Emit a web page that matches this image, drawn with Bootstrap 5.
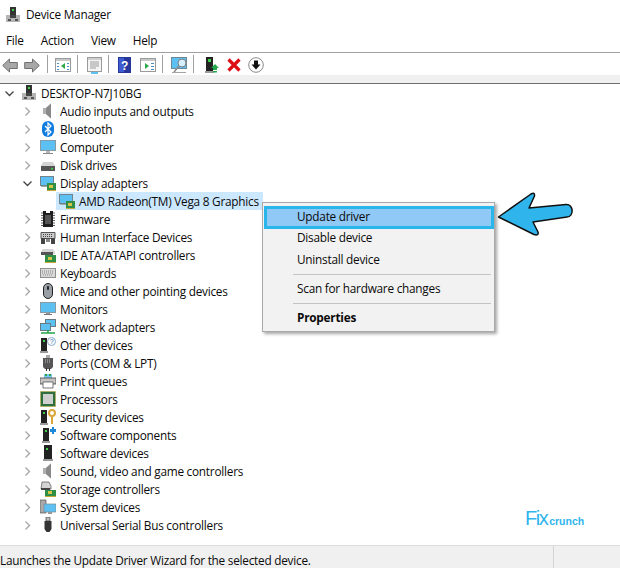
<!DOCTYPE html>
<html lang="en">
<head>
<meta charset="utf-8">
<title>Device Manager</title>
<link href="https://cdn.jsdelivr.net/npm/bootstrap@5.3.0/dist/css/bootstrap.min.css" rel="stylesheet">
<script src="https://cdn.jsdelivr.net/npm/bootstrap@5.3.0/dist/js/bootstrap.bundle.min.js"></script>
<style>
html,body{height:568px;overflow:hidden}
body{font-family:"Open Sans","Noto Sans",sans-serif;font-size:11.8px;color:#0a0a0a;background:#fff;position:relative;letter-spacing:-.24px}
.dm-title{height:30px;padding-left:5px;gap:5px}
.dm-menu{height:22px;padding-left:6px;gap:17px}
.dm-tools{height:23px;border-top:1px solid #a0a0a0;padding-left:2px;padding-top:2px}
.dm-tools svg{display:block;flex:none}
.dm-sep{width:1px;height:18px;background:#a0a0a0;flex:none;margin-top:-3px}
.tm4{margin-left:4px}.tm6{margin-left:6px}.tm7{margin-left:7px}.tm8{margin-left:8px}.tm9{margin-left:9px}.tm11{margin-left:11px}
.dm-band{height:9px;background:#f0f0f0;border-bottom:1px solid #6d6d6d}
.dm-tree{height:461px}
.dm-row{height:18px;line-height:17px;white-space:nowrap}
.dm-chev{width:9px;height:9px;flex:none;margin-right:8px}
.dm-ico{width:16px;height:16px;flex:none;margin-right:4px}
.lv0{padding-left:5px}
.lv1{padding-left:23px}
.lv0 .dm-chev{margin-right:7px}
.dm-sel{background:#cce8ff;margin-left:56px;padding-left:3px;width:207px}
.dm-status{height:24px;background:#f0f0f0;border-top:1px solid #dcdcdc;white-space:nowrap}
.dm-stxt{width:554px;height:100%;line-height:28px;border-right:1px solid #d4d4d4;flex:none}
.dm-ctx{position:absolute;left:262px;top:202px;width:233px;height:130px;background:#f2f2f2;border:1px solid #a9a9a9;box-shadow:2px 2px 3px rgba(0,0,0,.35);padding-top:3px}
.dm-item{height:22px;line-height:21px;padding-left:34px}
.dm-item.on{height:23px;line-height:15px;margin-left:1px;padding-left:30px;background:#90c8f6;border:3px solid #29b6ea;margin-bottom:-2px}
.dm-rule{height:1px;background:#c4c4c4;margin:3px 3px 3px 30px}
.dm-arrow{position:absolute;left:496px;top:190px}
.dm-mark{position:absolute;left:525px;top:506px;color:#2fb5ec;font-family:"Liberation Sans",sans-serif;line-height:24px;letter-spacing:0;white-space:nowrap}
.dm-mark b{font-size:20px;font-weight:400;letter-spacing:-1.500px}
.dm-mark span{font-size:10.500px;font-weight:700;margin-left:2px}
</style>
</head>
<body>
<svg width="0" height="0" class="position-absolute">
<defs>
<symbol id="i-chev" viewBox="0 0 9 9"><path d="M2.500 .5 6.500 4.500 2.500 8.500" fill="none" stroke="#a6a6a6" stroke-width="1.300"/></symbol>
<symbol id="i-down" viewBox="0 0 9 9"><path d="M.5 2.500 4.500 6.500 8.500 2.500" fill="none" stroke="#444" stroke-width="1.300"/></symbol>
<symbol id="i-pc" viewBox="0 0 16 16"><path d="M5 0h6v9H5z" fill="#333"/><rect x="7" y="2" width="2" height="2" fill="#3fd04a"/><path d="M1 8h14v7H1z" fill="#b5b5b5"/><path d="M5 8h6v3H5z" fill="#444"/><path d="M3 12h3v2H3zM10 12h3v2h-3z" fill="#555"/></symbol>
<symbol id="i-speaker" viewBox="0 0 16 16"><path d="M3 5h3l5-4.500v15L6 11H3z" fill="#b0b0b0"/><path d="M6 5l5-4.500v15L6 11z" fill="#8a8a8a"/></symbol>
<symbol id="i-bt" viewBox="0 0 16 16"><rect x="2" y="0" width="12" height="16" rx="6" fill="#0f7de0"/><path d="M5 5l6 6-3 3V2l3 3-6 6" fill="none" stroke="#fff" stroke-width="1.200"/></symbol>
<symbol id="i-mon" viewBox="0 0 16 16"><rect x=".5" y="1.500" width="15" height="10" fill="#5cc0f2" stroke="#8a9aa5"/><path d="M6 12h4v2H6z" fill="#b5b5b5"/><path d="M3 14h10v1H3z" fill="#8a8a8a"/></symbol>
<symbol id="i-disk" viewBox="0 0 16 16"><path d="M3 5h10l2 4v1H1V9z" fill="#d4d4d4"/><path d="M1 9h14v5H1z" fill="#555"/><rect x="11" y="11" width="2" height="1.500" fill="#3fd04a"/></symbol>
<symbol id="i-disp" viewBox="0 0 16 16"><rect x=".5" y="1.500" width="13" height="9" fill="#5cc0f2" stroke="#74828c"/><path d="M1 11h12v1H1z" fill="#9aa"/><rect x="7" y="8" width="9" height="7" fill="#2f8f46"/><rect x="9" y="10" width="4" height="3" fill="#d7c24a"/><path d="M7 15h9v1H7z" fill="#c5a83a"/></symbol>
<symbol id="i-chip" viewBox="0 0 16 16"><rect x="3" y="0" width="10" height="16" fill="#1e1e1e"/><path d="M6 0h4v2H6z" fill="#fff"/><path d="M1 2h2M1 4.500h2M1 7h2M1 9.500h2M1 12h2M1 14.500h2M13 2h2M13 4.500h2M13 7h2M13 9.500h2M13 12h2M13 14.500h2" stroke="#666"/><rect x="5" y="4" width="6" height="9" fill="#555"/></symbol>
<symbol id="i-hid" viewBox="0 0 16 16"><path d="M1 3.500h14v6H1z" fill="#c9c9c9" stroke="#555"/><path d="M3 5.500h10M3 7.500h10" stroke="#444" stroke-dasharray="1 1"/><path d="M1 9h4v6H1zM11 9h4v6h-4z" fill="#444"/><path d="M6 10h4v3H6z" fill="#888"/></symbol>
<symbol id="i-ide" viewBox="0 0 16 16"><path d="M3 2h10l2 3v2H1V5z" fill="#d4d4d4"/><path d="M1 5h12v3H1z" fill="#555"/><rect x="5" y="8" width="11" height="7" fill="#2f8f46"/><rect x="8" y="10" width="4" height="3" fill="#d7c24a"/><path d="M5 15h11v1H5z" fill="#c5a83a"/></symbol>
<symbol id="i-kbd" viewBox="0 0 16 16"><rect y="3" width="16" height="10" fill="#8f8f8f"/><rect x="1" y="4" width="14" height="8" fill="#d9d9d9"/><path d="M2 6h12M2 8h12M3 10h10" stroke="#8a8a8a" stroke-dasharray="1 1"/></symbol>
<symbol id="i-mouse" viewBox="0 0 16 16"><rect x="3.500" y=".5" width="9" height="15" rx="4.500" fill="#9a9fa6" stroke="#222"/><rect x="7" y="3" width="2" height="4" rx="1" fill="#222"/></symbol>
<symbol id="i-moni" viewBox="0 0 16 16"><rect x=".5" y="1.500" width="15" height="10" fill="#5cc0f2" stroke="#8a9aa5"/><path d="M6 12h4v1H6z" fill="#999"/><path d="M4 13h8v1H4z" fill="#777"/></symbol>
<symbol id="i-net" viewBox="0 0 16 16"><rect x="5.500" y=".5" width="10" height="7" fill="#5cc0f2" stroke="#6a7a85"/><rect x=".5" y="4.500" width="10" height="7" fill="#5cc0f2" stroke="#6a7a85"/><path d="M1 14h14M8 11v3" stroke="#25a244" stroke-width="1.500"/></symbol>
<symbol id="i-other" viewBox="0 0 16 16"><path d="M1 1h6v13H1z" fill="#222"/><rect x="3" y="3" width="2" height="2" fill="#3fd04a"/><path d="M0 14h8v2H0z" fill="#999"/><circle cx="11.500" cy="4.500" r="4" fill="#fff" stroke="#8aa8c8"/><text x="11.500" y="7" font-size="7" text-anchor="middle" fill="#2a6fb5" font-family="Liberation Sans">?</text></symbol>
<symbol id="i-port" viewBox="0 0 16 16"><path d="M6 0h4v3H6z" fill="#aaa"/><path d="M3 3h10v9l-2 2H5l-2-2z" fill="#555"/><path d="M5 5h6M5 7h6" stroke="#bbb" stroke-dasharray="1 1"/><path d="M6 13h1v3H6zM9 13h1v3H9z" fill="#333"/></symbol>
<symbol id="i-print" viewBox="0 0 16 16"><path d="M4 1h8v4H4z" fill="#7fc6ee"/><rect y="5" width="16" height="6" fill="#c4c4c4" stroke="#444" stroke-width=".8"/><path d="M3 9h10v6H3z" fill="#fff" stroke="#555" stroke-width=".8"/><path d="M5 1h2v2H5zM9 1h2v2H9z" fill="#2fa84c"/></symbol>
<symbol id="i-cpu" viewBox="0 0 16 16"><rect x=".5" y=".5" width="15" height="15" fill="#2f6e3f" stroke="#c5a83a" stroke-dasharray="1 1"/><rect x="3" y="3" width="10" height="10" fill="#cfcfcf"/></symbol>
<symbol id="i-sec" viewBox="0 0 16 16"><path d="M1 1h6v13H1z" fill="#222"/><rect x="3" y="3" width="2" height="2" fill="#3fd04a"/><path d="M0 14h8v2H0z" fill="#999"/><circle cx="12" cy="4" r="3" fill="none" stroke="#d9a63a" stroke-width="2"/><path d="M12 7v8" stroke="#d9a63a" stroke-width="2"/></symbol>
<symbol id="i-comp" viewBox="0 0 16 16"><path d="M3 1h6v13H3z" fill="#222"/><rect x="5" y="3" width="2" height="2" fill="#3fd04a"/><path d="M2 14h8v2H2z" fill="#999"/><path d="M10 2h2V0h2v2h2v3h-2v2h-2V5h-2z" fill="#1e88d8"/></symbol>
<symbol id="i-sdev" viewBox="0 0 16 16"><path d="M4 0h8v14H4z" fill="#222"/><rect x="6" y="3" width="2" height="2" fill="#3fd04a"/><path d="M3 14h10v2H3z" fill="#999"/></symbol>
<symbol id="i-stor" viewBox="0 0 16 16"><path d="M2 1h7l2 4v3H1z" fill="#d4d4d4" stroke="#555" stroke-width=".7"/><path d="M1 7h9v2H1z" fill="#444"/><rect x="5" y="9" width="11" height="6" fill="#2f8f46"/><rect x="8" y="10" width="4" height="3" fill="#d7c24a"/><path d="M5 15h11v1H5z" fill="#c5a83a"/></symbol>
<symbol id="i-sys" viewBox="0 0 16 16"><path d="M0 1h6v13H0z" fill="#aaa" stroke="#555" stroke-width=".7"/><rect x="4" y="5" width="12" height="8" fill="#5cc0f2" stroke="#7a8a95" stroke-width=".7"/><path d="M8 13h4v2H8z" fill="#999"/></symbol>
<symbol id="i-usb" viewBox="0 0 16 16"><path d="M6 0h4v4H6z" fill="#bbb" stroke="#444" stroke-width=".7"/><path d="M4.500 4h7v8l-2 3h-3l-2-3z" fill="#333"/></symbol>
</defs>
</svg>

<div class="dm-title d-flex align-items-center">
<svg width="16" height="16"><use href="#i-pc"/></svg><span>Device Manager</span>
</div>
<div class="dm-menu d-flex align-items-center"><span>File</span><span>Action</span><span>View</span><span>Help</span></div>
<div class="dm-tools d-flex align-items-center">
<svg width="16" height="15" viewBox="0 0 16 15"><path d="M.7 7.500 7.500 1v3.500h7.800v6H7.500V14z" fill="#a8a8a8" stroke="#6f6f6f"/></svg>
<svg class="tm6" width="16" height="15" viewBox="0 0 16 15"><path d="M15.300 7.500 8.500 1v3.500H.7v6h7.800V14z" fill="#a8a8a8" stroke="#6f6f6f"/></svg>
<span class="dm-sep tm7"></span>
<svg class="tm7" width="16" height="14" viewBox="0 0 16 14"><rect x=".5" y=".5" width="15" height="13" fill="#fff" stroke="#9a9a9a"/><path d="M1 1h14v2H1z" fill="#c8c8c8"/><path d="M10 5 6 8l4 3z" fill="#2fa84c"/><path d="M2 5h2v1H2zM2 8h2v1H2zM2 11h2v1H2zM12 5h2v1h-2zM12 8h2v1h-2zM12 11h2v1h-2z" fill="#4a90c8"/></svg>
<span class="dm-sep tm6"></span>
<svg class="tm9" width="15" height="17" viewBox="0 0 15 17"><rect x=".5" y=".5" width="14" height="14" fill="#f4f4f4" stroke="#9a9a9a"/><path d="M1 1h13v2H1z" fill="#d0d0d0"/><path d="M3 5h9M3 7h9M3 9h9M3 11h6" stroke="#9a9a9a"/><path d="M4 15h7v2H4z" fill="#5cc0f2"/></svg>
<span class="dm-sep tm6"></span>
<svg class="tm9" width="13" height="16" viewBox="0 0 13 16"><rect width="13" height="16" fill="#26389c"/><rect x="1" y="1" width="5" height="14" fill="#3f5cd0"/><text x="6.500" y="12.500" font-size="12" font-weight="700" text-anchor="middle" fill="#fff" font-family="Liberation Sans">?</text></svg>
<svg class="tm9" width="16" height="14" viewBox="0 0 16 14"><rect x=".5" y=".5" width="15" height="13" fill="#fff" stroke="#9a9a9a"/><path d="M1 1h14v2H1z" fill="#c8c8c8"/><path d="M5 5l4 3-4 3z" fill="#2fa84c"/><path d="M11 5h3v1h-3zM11 8h3v1h-3zM11 11h3v1h-3z" fill="#4a90c8"/></svg>
<span class="dm-sep tm6"></span>
<svg class="tm8" width="18" height="17" viewBox="0 0 18 17"><rect x=".5" y=".5" width="15" height="11" fill="#5cc0f2" stroke="#6a8a9a"/><circle cx="11" cy="6" r="4" fill="#d6effc" stroke="#7d7d7d"/><path d="M8 9 3 15" stroke="#888" stroke-width="1.500"/><path d="M1 15h14v1H1z" fill="#a5a5a5"/></svg>
<span class="dm-sep tm4"></span>
<svg class="tm11" width="14" height="17" viewBox="0 0 14 17"><path d="M1 0h7v14H1z" fill="#222"/><rect x="3" y="2" width="3" height="3" fill="#3fd04a"/><path d="M0 14h9v2H0z" fill="#999"/><path d="M10 7l4 4h-2v2H8v-2H6z" fill="#22a84a"/><path d="M8 14h4v1.500H8z" fill="#22a84a"/></svg>
<svg class="tm8" width="14" height="14" viewBox="0 0 14 14"><path d="M1.500 1.500 12.500 12.500M12.500 1.500 1.500 12.500" stroke="#dd1016" stroke-width="3.200"/></svg>
<svg class="tm7" width="16" height="16" viewBox="0 0 16 16"><circle cx="8" cy="8" r="7.300" fill="#fff" stroke="#8a8a8a"/><path d="M6 3.500h4v4h2.500L8 12.500l-4.500-5H6z" fill="#111"/></svg>
</div>
<div class="dm-band"></div>

<div class="dm-tree">
<div class="dm-row d-flex align-items-center lv0"><svg class="dm-chev"><use href="#i-down"/></svg><svg class="dm-ico"><use href="#i-pc"/></svg><span>DESKTOP-N7J10BG</span></div>
<div class="dm-row d-flex align-items-center lv1"><svg class="dm-chev"><use href="#i-chev"/></svg><svg class="dm-ico"><use href="#i-speaker"/></svg><span>Audio inputs and outputs</span></div>
<div class="dm-row d-flex align-items-center lv1"><svg class="dm-chev"><use href="#i-chev"/></svg><svg class="dm-ico"><use href="#i-bt"/></svg><span>Bluetooth</span></div>
<div class="dm-row d-flex align-items-center lv1"><svg class="dm-chev"><use href="#i-chev"/></svg><svg class="dm-ico"><use href="#i-mon"/></svg><span>Computer</span></div>
<div class="dm-row d-flex align-items-center lv1"><svg class="dm-chev"><use href="#i-chev"/></svg><svg class="dm-ico"><use href="#i-disk"/></svg><span>Disk drives</span></div>
<div class="dm-row d-flex align-items-center lv1"><svg class="dm-chev"><use href="#i-down"/></svg><svg class="dm-ico"><use href="#i-disp"/></svg><span>Display adapters</span></div>
<div class="dm-row d-flex align-items-center dm-sel"><svg class="dm-ico"><use href="#i-disp"/></svg><span>AMD Radeon(TM) Vega 8 Graphics</span></div>
<div class="dm-row d-flex align-items-center lv1"><svg class="dm-chev"><use href="#i-chev"/></svg><svg class="dm-ico"><use href="#i-chip"/></svg><span>Firmware</span></div>
<div class="dm-row d-flex align-items-center lv1"><svg class="dm-chev"><use href="#i-chev"/></svg><svg class="dm-ico"><use href="#i-hid"/></svg><span>Human Interface Devices</span></div>
<div class="dm-row d-flex align-items-center lv1"><svg class="dm-chev"><use href="#i-chev"/></svg><svg class="dm-ico"><use href="#i-ide"/></svg><span>IDE ATA/ATAPI controllers</span></div>
<div class="dm-row d-flex align-items-center lv1"><svg class="dm-chev"><use href="#i-chev"/></svg><svg class="dm-ico"><use href="#i-kbd"/></svg><span>Keyboards</span></div>
<div class="dm-row d-flex align-items-center lv1"><svg class="dm-chev"><use href="#i-chev"/></svg><svg class="dm-ico"><use href="#i-mouse"/></svg><span>Mice and other pointing devices</span></div>
<div class="dm-row d-flex align-items-center lv1"><svg class="dm-chev"><use href="#i-chev"/></svg><svg class="dm-ico"><use href="#i-moni"/></svg><span>Monitors</span></div>
<div class="dm-row d-flex align-items-center lv1"><svg class="dm-chev"><use href="#i-chev"/></svg><svg class="dm-ico"><use href="#i-net"/></svg><span>Network adapters</span></div>
<div class="dm-row d-flex align-items-center lv1"><svg class="dm-chev"><use href="#i-chev"/></svg><svg class="dm-ico"><use href="#i-other"/></svg><span>Other devices</span></div>
<div class="dm-row d-flex align-items-center lv1"><svg class="dm-chev"><use href="#i-chev"/></svg><svg class="dm-ico"><use href="#i-port"/></svg><span>Ports (COM &amp; LPT)</span></div>
<div class="dm-row d-flex align-items-center lv1"><svg class="dm-chev"><use href="#i-chev"/></svg><svg class="dm-ico"><use href="#i-print"/></svg><span>Print queues</span></div>
<div class="dm-row d-flex align-items-center lv1"><svg class="dm-chev"><use href="#i-chev"/></svg><svg class="dm-ico"><use href="#i-cpu"/></svg><span>Processors</span></div>
<div class="dm-row d-flex align-items-center lv1"><svg class="dm-chev"><use href="#i-chev"/></svg><svg class="dm-ico"><use href="#i-sec"/></svg><span>Security devices</span></div>
<div class="dm-row d-flex align-items-center lv1"><svg class="dm-chev"><use href="#i-chev"/></svg><svg class="dm-ico"><use href="#i-comp"/></svg><span>Software components</span></div>
<div class="dm-row d-flex align-items-center lv1"><svg class="dm-chev"><use href="#i-chev"/></svg><svg class="dm-ico"><use href="#i-sdev"/></svg><span>Software devices</span></div>
<div class="dm-row d-flex align-items-center lv1"><svg class="dm-chev"><use href="#i-chev"/></svg><svg class="dm-ico"><use href="#i-speaker"/></svg><span>Sound, video and game controllers</span></div>
<div class="dm-row d-flex align-items-center lv1"><svg class="dm-chev"><use href="#i-chev"/></svg><svg class="dm-ico"><use href="#i-stor"/></svg><span>Storage controllers</span></div>
<div class="dm-row d-flex align-items-center lv1"><svg class="dm-chev"><use href="#i-chev"/></svg><svg class="dm-ico"><use href="#i-sys"/></svg><span>System devices</span></div>
<div class="dm-row d-flex align-items-center lv1"><svg class="dm-chev"><use href="#i-chev"/></svg><svg class="dm-ico"><use href="#i-usb"/></svg><span>Universal Serial Bus controllers</span></div>
</div>
<div class="dm-status d-flex"><div class="dm-stxt">Launches the Update Driver Wizard for the selected device.</div></div>

<div class="dm-ctx">
<div class="dm-item on">Update driver</div>
<div class="dm-item">Disable device</div>
<div class="dm-item">Uninstall device</div>
<div class="dm-rule"></div>
<div class="dm-item">Scan for hardware changes</div>
<div class="dm-rule"></div>
<div class="dm-item fw-bold">Properties</div>
</div>
<svg class="dm-arrow" width="80" height="50" viewBox="0 0 80 50"><path d="M2.500 27 35 4Q39 2 38.500 6L33 18 70 14.500C78 14 78 26.500 71 27L37 32 42 42Q43 46 38 44.500Z" fill="#2fb5ec" stroke="#111" stroke-width="1.500" stroke-linejoin="round"/></svg>
<div class="dm-mark"><b>Fix</b><span>crunch</span></div>
</body>
</html>
